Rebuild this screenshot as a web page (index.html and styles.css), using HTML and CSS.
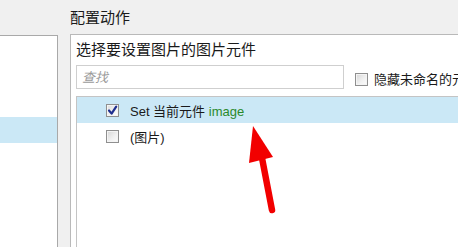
FILE: index.html
```html
<!DOCTYPE html>
<html lang="zh">
<head>
<meta charset="utf-8">
<link rel="stylesheet" href="styles.css">
</head>
<body>
<div class="app">
  <div class="left-col">
    <div class="left-panel">
      <div class="left-row selected"></div>
    </div>
  </div>
  <div class="right-col">
    <div class="title">配置动作</div>
    <div class="panel">
      <div class="label">选择要设置图片的图片元件</div>
      <div class="search-row">
        <div class="search"><span class="placeholder">查找</span></div>
        <span class="cb"></span>
        <span class="cb-label">隐藏未命名的元件</span>
      </div>
      <div class="list">
        <div class="row selected">
          <span class="cb checked"><svg viewBox="0 0 13 13" width="13" height="13"><path d="M3 6.5 L5.6 9.6 L10.2 2.6" fill="none" stroke="#1f2f8f" stroke-width="2.2" stroke-linecap="round" stroke-linejoin="round"/></svg></span>
          <span class="row-text">Set 当前元件 <span class="green">image</span></span>
        </div>
        <div class="row">
          <span class="cb"></span>
          <span class="row-text">(图片)</span>
        </div>
      </div>
    </div>
  </div>
</div>
<svg class="arrow" width="458" height="247" viewBox="0 0 458 247">
  <line x1="272" y1="210" x2="262" y2="158" stroke="#f20000" stroke-width="6.5" stroke-linecap="round"/>
  <polygon points="253,126 249,163 273,157" fill="#f20000"/>
</svg>
</body>
</html>
```

FILE: styles.css
```css
html, body {
  margin: 0;
  padding: 0;
  width: 458px;
  height: 247px;
  overflow: hidden;
  background: #f0f0f0;
  font-family: "Liberation Sans", "Noto Sans CJK SC", sans-serif;
  color: #1a1a1a;
}

.app {
  display: flex;
  gap: 12px;
  height: 247px;
}

.left-col {
  width: 58px;
  padding-top: 35px;
  box-sizing: border-box;
  flex-shrink: 0;
  display: flex;
}

.left-panel {
  flex: 1;
  background: #fff;
  border-top: 1px solid #a9a9a9;
  border-right: 1px solid #a9a9a9;
}

.left-row.selected {
  margin-top: 81px;
  height: 26px;
  background: #cbe8f6;
}

.right-col {
  flex: 1;
  display: flex;
  flex-direction: column;
  min-width: 0;
}

.title {
  height: 34px;
  line-height: 35px;
  font-size: 15px;
  color: #1a1a1a;
}

.panel {
  flex: 1;
  width: 420px;
  background: #fff;
  border-top: 1px solid #b9b9b9;
  border-left: 1px solid #b9b9b9;
  padding-left: 5px;
  display: flex;
  flex-direction: column;
}

.label {
  margin-top: 4px;
  height: 22px;
  line-height: 22px;
  font-size: 15px;
  white-space: nowrap;
}

.search-row {
  margin-top: 4px;
  display: flex;
  align-items: center;
  height: 24px;
  white-space: nowrap;
}

.search {
  width: 268px;
  height: 24px;
  box-sizing: border-box;
  border: 1px solid #cfcfcf;
  background: #fff;
  padding-left: 5px;
  line-height: 21px;
  flex-shrink: 0;
}

.placeholder {
  font-size: 13px;
  font-style: italic;
  color: #9a9a9a;
}

.search-row .cb {
  margin-left: 11px;
  margin-top: 4px;
}

.cb-label {
  margin-left: 6px;
  margin-top: 2px;
  font-size: 13px;
  color: #1a1a1a;
}

.cb {
  display: inline-block;
  width: 13px;
  height: 13px;
  box-sizing: border-box;
  border: 1px solid #8f8f8f;
  background: linear-gradient(135deg, #d6d6d6 0%, #f2f2f2 60%, #fbfbfb 100%);
  box-shadow: inset 0 0 0 1px #f4f4f4;
  flex-shrink: 0;
  position: relative;
}

.cb.checked {
  background: linear-gradient(135deg, #dcdcdc 0%, #f4f4f4 60%, #fff 100%);
}

.cb.checked svg {
  position: absolute;
  left: -1px;
  top: -1px;
}

.list {
  margin-top: 7px;
  flex: 1;
  border-top: 1px solid #c4c4c4;
  border-left: 1px solid #c4c4c4;
  background: #fff;
}

.row {
  height: 26px;
  display: flex;
  align-items: center;
  padding-left: 29px;
}

.row.selected {
  background: #cbe8f6;
}

.row-text {
  margin-left: 11px;
  font-size: 13px;
  white-space: nowrap;
  color: #1a1a1a;
}

.green {
  color: #2a8a2a;
}

.arrow {
  position: absolute;
  left: 0;
  top: 0;
  pointer-events: none;
}
```
